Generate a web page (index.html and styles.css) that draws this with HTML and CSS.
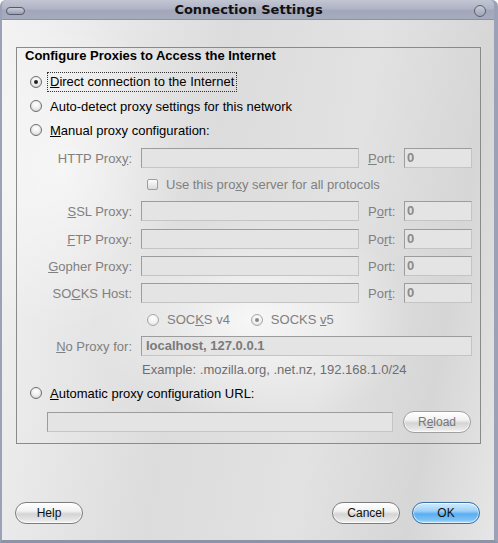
FILE: index.html
```html
<!DOCTYPE html>
<html>
<head>
<meta charset="utf-8">
<link rel="stylesheet" href="styles.css">
</head>
<body>
<div class="window">
  <div class="titlebar">
    <span class="tb-pill"></span>
    <span class="tb-title">Connection Settings</span>
    <span class="tb-circle"></span>
  </div>
  <div class="content">
    <div class="group">
      <div class="group-title">Configure Proxies to Access the Internet</div>
      <div class="radios">
        <div class="radio-row"><span class="radio checked"></span><span class="focus"><u>D</u>irect connection to the Internet</span></div>
        <div class="radio-row"><span class="radio"></span><span class="rlabel">Auto-detect proxy settings for this network</span></div>
        <div class="radio-row"><span class="radio"></span><span class="rlabel"><u>M</u>anual proxy configuration:</span></div>
      </div>
      <div class="proxy">
        <div class="prow">
          <span class="plabel">HTTP Prox<u>y</u>:</span><span class="field"></span><span class="portlabel"><u>P</u>ort:</span><span class="field port">0</span>
        </div>
        <div class="subrow">
          <span class="check"></span><span class="dis">Use this pro<u>x</u>y server for all protocols</span>
        </div>
        <div class="prow">
          <span class="plabel"><u>S</u>SL Proxy:</span><span class="field"></span><span class="portlabel">P<u>o</u>rt:</span><span class="field port">0</span>
        </div>
        <div class="prow r8">
          <span class="plabel"><u>F</u>TP Proxy:</span><span class="field"></span><span class="portlabel">Po<u>r</u>t:</span><span class="field port">0</span>
        </div>
        <div class="prow">
          <span class="plabel"><u>G</u>opher Proxy:</span><span class="field"></span><span class="portlabel">Port:</span><span class="field port">0</span>
        </div>
        <div class="prow">
          <span class="plabel">SO<u>C</u>KS Host:</span><span class="field"></span><span class="portlabel">Por<u>t</u>:</span><span class="field port">0</span>
        </div>
        <div class="subrow socks">
          <span class="radio dim"></span><span class="dis">SOC<u>K</u>S v4</span>
          <span class="radio dim checked v5"></span><span class="dis">SOCKS <u>v</u>5</span>
        </div>
        <div class="prow">
          <span class="plabel"><u>N</u>o Proxy for:</span><span class="field wide">localhost, 127.0.0.1</span>
        </div>
        <div class="example">Example: .mozilla.org, .net.nz, 192.168.1.0/24</div>
      </div>
      <div class="radio-row auto"><span class="radio"></span><span class="rlabel"><u>A</u>utomatic proxy configuration URL:</span></div>
      <div class="urlrow">
        <span class="field url"></span>
        <span class="btn dimbtn">R<u>e</u>load</span>
      </div>
    </div>
    <div class="buttons">
      <span class="btn">Help</span>
      <span class="spacer"></span>
      <span class="btn">Cancel</span>
      <span class="btn ok">OK</span>
    </div>
  </div>
</div>
</body>
</html>
```

FILE: styles.css
```css
html, body {
  margin: 0;
  padding: 0;
}
body {
  width: 498px;
  height: 543px;
  overflow: hidden;
  font-family: "Liberation Sans", Arial, sans-serif;
  font-size: 13px;
  color: #000;
}
.window {
  box-sizing: border-box;
  width: 498px;
  height: 543px;
  display: flex;
  flex-direction: column;
  border-left: 2px solid #9ba1b6;
  border-right: 4px solid #9ba1b6;
  border-bottom: 3px solid #8d93a8;
  border-top-left-radius: 6px;
  border-top-right-radius: 6px;
  background: #a9aec2;
}
.titlebar {
  height: 20px;
  flex: none;
  display: flex;
  align-items: center;
  padding: 0 8px 0 4px;
  background: linear-gradient(#c2c5d2 0%, #b0b4c6 45%, #a2a7bb 55%, #a7abbe 100%);
  border-bottom: 1px solid #8c91a6;
  box-sizing: border-box;
  border-top-left-radius: 5px;
  border-top-right-radius: 5px;
}
.tb-pill {
  width: 19px;
  height: 8px;
  border: 1px solid #555a6a;
  border-radius: 5px;
  background: linear-gradient(#c9ccd8, #9a9fb2);
  box-sizing: border-box;
  margin-top: 2px;
}
.tb-title {
  flex: 1;
  text-align: center;
  font-family: "DejaVu Sans", sans-serif;
  font-weight: bold;
  font-size: 13px;
  color: #111;
  margin-right: 2px;
}
.tb-circle {
  width: 12px;
  height: 12px;
  border: 1.5px solid #5a5f70;
  border-radius: 50%;
  box-sizing: border-box;
  background: linear-gradient(#c7cad6, #a0a5b7);
  margin-top: 3px;
}
.content {
  flex: 1;
  display: flex;
  flex-direction: column;
  padding: 27px 14px 16px 14px;
  background:
    radial-gradient(ellipse 160px 110px at 250px 300px, rgba(255,255,255,0.75), rgba(255,255,255,0) 100%),
    radial-gradient(ellipse 120px 160px at 60px 150px, rgba(255,255,255,0.55), rgba(255,255,255,0) 100%),
    linear-gradient(100deg, #f3f3f3 0%, #dcdcdc 40%, #e2e2e2 65%, #d6d6d6 85%, #e6e6e6 100%);
}
.group {
  border: 1px solid #8a8a8a;
  display: flex;
  flex-direction: column;
  padding: 0 0 10px 0;
  margin-right: -1px;
}
.group-title {
  font-weight: bold;
  height: 16px;
  line-height: 16px;
  padding-left: 8px;
  margin-top: 0;
}
.radios {
  margin-top: 6px;
  display: flex;
  flex-direction: column;
}
.radio-row {
  height: 24px;
  display: flex;
  align-items: center;
  padding-left: 13px;
}
.radio-row.auto {
  height: 20px;
  margin-top: 5px;
}
.radio {
  width: 12px;
  height: 12px;
  border-radius: 50%;
  border: 1px solid #6e6e6e;
  box-sizing: border-box;
  background: radial-gradient(circle at 50% 35%, #ffffff 0%, #f0f0f0 45%, #c8c8c8 100%);
  position: relative;
  flex: none;
  margin-right: 8px;
}
.radio.checked::after {
  content: "";
  position: absolute;
  left: 3px;
  top: 3px;
  width: 4px;
  height: 4px;
  border-radius: 50%;
  background: #222;
}
.radio.dim {
  border-color: #a8a8a8;
  background: radial-gradient(circle at 50% 35%, #ffffff 0%, #f2f2f2 50%, #d8d8d8 100%);
}
.radio.dim.checked::after {
  background: #888;
}
.focus {
  outline: 1px dotted #333;
  padding: 2px 2px;
  margin-left: -2px;
  line-height: 14px;
}
.proxy {
  margin-top: 6px;
  margin-left: 30px;
  display: flex;
  flex-direction: column;
}
.prow {
  display: grid;
  grid-template-columns: 85px 218px 27px 68px;
  column-gap: 9px;
  height: 20px;
  align-items: center;
  margin-top: 7px;
}
.prow:first-child {
  margin-top: 0;
}
.prow.r8 {
  margin-top: 8px;
}
.plabel {
  text-align: right;
  color: #808080;
  white-space: nowrap;
}
.portlabel {
  color: #808080;
  white-space: nowrap;
}
.field {
  box-sizing: border-box;
  height: 20px;
  border: 1px solid #9c9c9c;
  border-right-color: #c4c4c4;
  border-bottom-color: #c4c4c4;
  background: #e4e4e4;
  color: #8a8a8a;
  font-weight: bold;
  line-height: 18px;
  padding-left: 4px;
  display: block;
}
.field.port {
  padding-left: 2px;
}
.field.wide {
  grid-column: 2 / 5;
  color: #7a7a7a;
}
.subrow {
  height: 19px;
  margin-top: 7px;
  display: flex;
  align-items: center;
  padding-left: 100px;
}
.check {
  width: 11px;
  height: 11px;
  box-sizing: border-box;
  border: 1px solid #9e9e9e;
  border-radius: 2px;
  background: linear-gradient(#fdfdfd, #dadada);
  margin-right: 8px;
  flex: none;
}
.dis {
  color: #808080;
  white-space: nowrap;
}
.socks .radio {
  margin-right: 8px;
}
.socks .v5 {
  margin-left: 21px;
}
.example {
  margin-top: 6px;
  height: 16px;
  line-height: 16px;
  padding-left: 95px;
  color: #6e6e6e;
}
.urlrow {
  margin-top: 8px;
  display: flex;
  align-items: center;
  padding-left: 30px;
}
.field.url {
  width: 346px;
}
.btn {
  box-sizing: border-box;
  width: 68px;
  height: 22px;
  border-radius: 11px;
  border: 1px solid #7d7d7d;
  background: linear-gradient(#ffffff 0%, #f2f2f2 40%, #d4d4d4 55%, #e6e6e6 85%, #f6f6f6 100%);
  display: flex;
  align-items: center;
  justify-content: center;
  font-size: 12px;
  color: #111;
  box-shadow: inset 0 0 0 1px rgba(255,255,255,0.6);
}
.dimbtn {
  margin-left: 10px;
  color: #777;
  border-color: #a0a0a0;
}
.buttons {
  margin-top: auto;
  display: flex;
  align-items: center;
  gap: 12px;
}
.buttons .btn:first-child {
  margin-left: -1px;
}
.spacer {
  flex: 1;
}
.btn.ok {
  background: linear-gradient(#d4ecfd 0%, #9dd1f8 40%, #5aaef0 55%, #7cc2f6 85%, #b6e0fb 100%);
  border-color: #3a6fa8;
  color: #111;
}
```
